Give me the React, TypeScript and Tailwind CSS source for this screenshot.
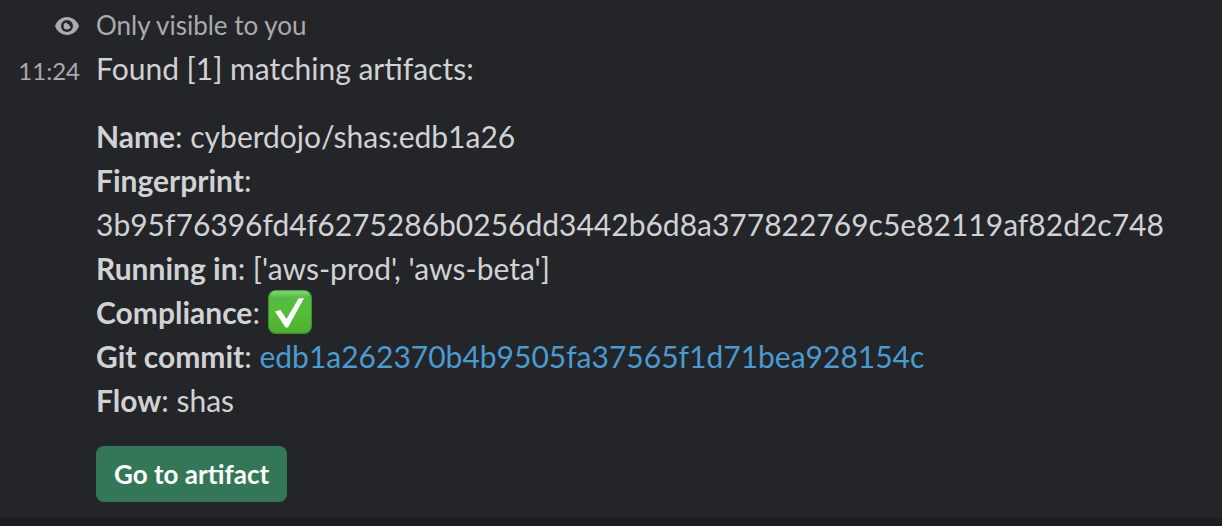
import React from 'react';

function EyeIcon() {
  return (
    <svg viewBox="0 0 25 22" className="h-[22px] w-[25px]" aria-hidden="true">
      <path d="M0 12C2 6.500 6.500 3 12 3s10 3.500 12 9c-2 5.500-6.500 9-12 9S2 17.500 0 12Z" fill="#ababad" />
      <circle cx="12" cy="12" r="6" fill="#242529" />
      <path d="M12 8.500v3.500h3.500A3.500 3.500 0 1 1 12 8.500Z" fill="#ababad" />
      <circle cx="12.500" cy="11.500" r="1.800" fill="#ababad" />
    </svg>
  );
}

function CheckEmoji() {
  return (
    <svg viewBox="0 0 44 44" className="h-11 w-11" role="img" aria-label="Compliant">
      <defs>
        <linearGradient id="tile" x1="0" y1="0" x2="0" y2="1">
          <stop offset="0" stopColor="#55b948" />
          <stop offset="0.5" stopColor="#55bd3a" />
          <stop offset="1" stopColor="#50b030" />
        </linearGradient>
        <linearGradient id="shine" x1="0" y1="0" x2="0" y2="1">
          <stop offset="0" stopColor="#a5df98" stopOpacity="0.7" />
          <stop offset="1" stopColor="#7bd065" stopOpacity="0" />
        </linearGradient>
      </defs>
      <rect width="44" height="44" rx="8" fill="#3c9430" />
      <rect x="1" y="0.500" width="42" height="42" rx="7" fill="url(#tile)" />
      <rect x="3" y="1.500" width="38" height="7" rx="3.500" fill="url(#shine)" />
      <path d="M7 21.500l5.500-1.500 6 9L30.500 8.500 36 8 20 37.500h-2.500Z" fill="#fff" />
    </svg>
  );
}

function Field({ label, children }: { label: string; children: React.ReactNode }) {
  return (
    <div className="min-h-11 break-words">
      <strong className="font-bold">{label}</strong>: {children}
    </div>
  );
}

export default function App() {
  return (
    <main className="flex min-h-screen flex-col bg-[#1d1c20] font-['Lato',sans-serif] text-[30px] leading-[44px] text-[#d1d2d3]">
      <div className="grid grid-cols-[80px_minmax(0,1fr)] items-baseline gap-x-4 bg-[#242529] pt-1 pr-8 pb-4">
        <div className="flex h-[42px] items-center justify-end self-start"><EyeIcon /></div>
        <p className="text-[26px] leading-[42px] text-[#ababad]">Only visible to you</p>
        <time className="text-right text-[24px] text-[#ababad]">11:24</time>
        <div>
          <p>Found [1] matching artifacts:</p>
          <div className="mt-6">
            <Field label="Name">cyberdojo/shas:edb1a26</Field>
            <Field label="Fingerprint">
              <br />
              3b95f76396fd4f6275286b0256dd3442b6d8a377822769c5e82119af82d2c748
            </Field>
            <Field label="Running in">['aws-prod', 'aws-beta']</Field>
            <div className="flex h-11 items-center gap-2">
              <span><strong>Compliance</strong>:</span>
              <CheckEmoji />
            </div>
            <Field label="Git commit">
              <a href="#commit" className="text-[#4a9bd1]">edb1a262370b4b9505fa37565f1d71bea928154c</a>
            </Field>
            <Field label="Flow">shas</Field>
          </div>
          <button type="button" className="mt-6 block h-14 rounded-lg bg-[#347758] px-[18px] text-[26px] font-bold text-white">
            Go to artifact
          </button>
        </div>
      </div>
    </main>
  );
}
